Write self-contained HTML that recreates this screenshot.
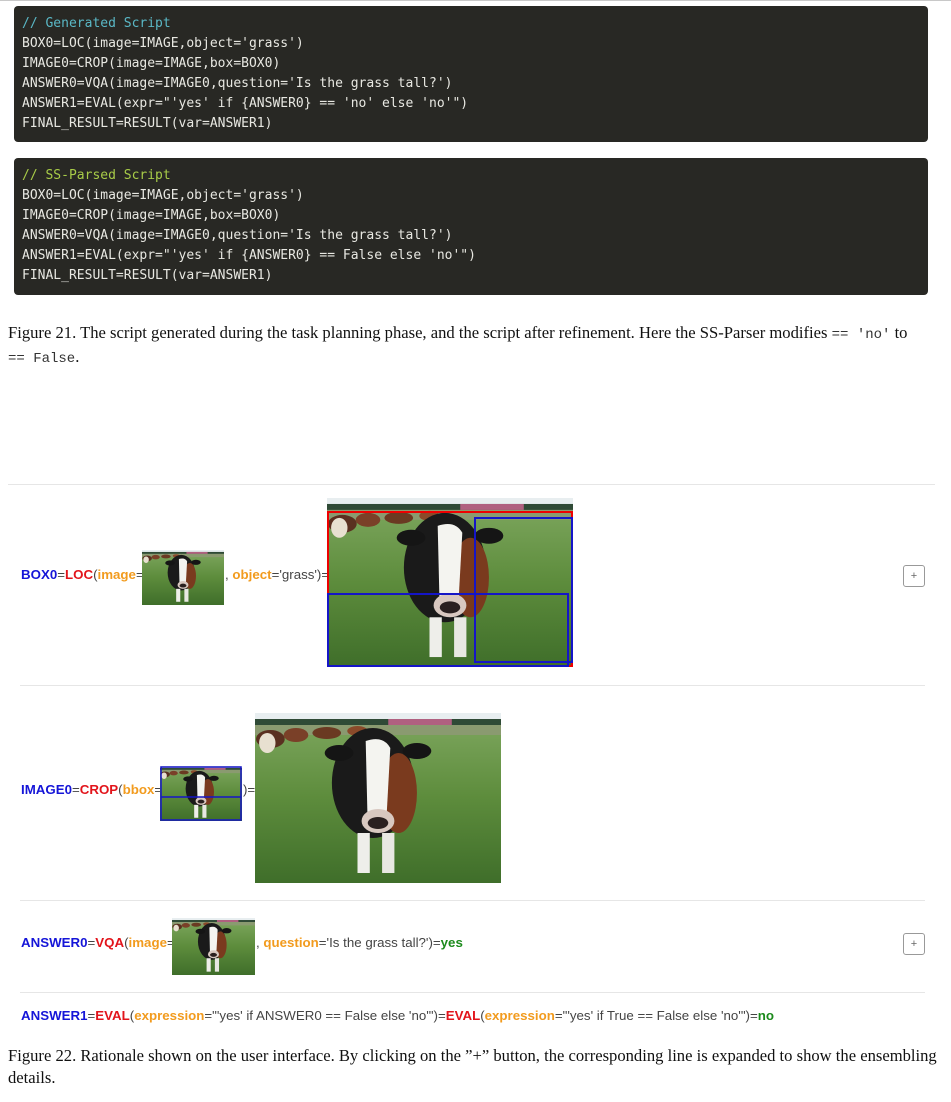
<!DOCTYPE html>
<html><head><meta charset="utf-8"><style>
body{margin:0;width:951px;height:1102px;background:#fff;position:relative;overflow:hidden}
.abs{position:absolute}
.code{position:absolute;left:14px;width:914px;background:#282824;border-radius:4px;font-family:"DejaVu Sans Mono",monospace;font-size:13px;line-height:20px;color:#e8e8e2;padding:8px 0 0 8px;box-sizing:border-box;white-space:pre}
.cap{position:absolute;left:8px;width:930px;font-family:"Liberation Serif",serif;font-size:16.6px;line-height:22px;color:#111}
.tt{font-family:"Liberation Mono",monospace;font-size:14px;color:#333}
.hr{position:absolute;height:1px;background:#e6e6e6}
.ln{position:absolute;font-family:"Liberation Sans",sans-serif;font-size:13.3px;color:#444;white-space:pre}
.b{color:#1515d8;font-weight:bold}.r{color:#e2141b;font-weight:bold}.o{color:#f29b1e;font-weight:bold}.g{color:#1b8a1b;font-weight:bold}
.plus{position:absolute;width:20px;height:20px;border:1px solid #999;border-radius:3px;font-family:"Liberation Sans",sans-serif;font-size:11px;color:#666;text-align:center;line-height:20px}
svg.im{position:absolute}
</style></head><body>
<svg width="0" height="0" style="position:absolute">
<defs>
<linearGradient id="gr" x1="0" y1="0" x2="0" y2="1"><stop offset="0" stop-color="#7fa860"/><stop offset="0.5" stop-color="#5d8c3c"/><stop offset="1" stop-color="#3f6e2a"/></linearGradient>
<symbol id="cow" viewBox="0 0 240 170" preserveAspectRatio="none">
<rect width="240" height="170" fill="url(#gr)"/>
<rect width="240" height="8" fill="#e8eef0"/>
<rect y="6" width="240" height="6" fill="#2f4a36"/>
<rect x="130" y="6" width="62" height="6" fill="#b06080"/>
<rect y="12" width="240" height="10" fill="#8a9a70"/>
<ellipse cx="15" cy="26" rx="14" ry="9" fill="#5a3020"/><ellipse cx="40" cy="22" rx="12" ry="7" fill="#7a4028"/><ellipse cx="70" cy="20" rx="14" ry="6" fill="#6a3a22"/><ellipse cx="100" cy="18" rx="10" ry="5" fill="#8a4a2a"/>
<ellipse cx="12" cy="30" rx="8" ry="10" fill="#e8e0d0"/>
<ellipse cx="115" cy="70" rx="40" ry="55" fill="#1a1a1a"/>
<ellipse cx="140" cy="80" rx="18" ry="40" fill="#7a3a1e"/>
<ellipse cx="82" cy="40" rx="14" ry="8" fill="#151515"/><ellipse cx="158" cy="38" rx="14" ry="8" fill="#151515"/>
<path d="M108 28 Q125 22 132 35 L128 110 Q122 125 110 115 Z" fill="#f4f4f0"/>
<ellipse cx="120" cy="108" rx="16" ry="12" fill="#d8c8c0"/><ellipse cx="120" cy="110" rx="10" ry="6" fill="#2a2020"/>
<rect x="100" y="120" width="12" height="40" fill="#eeeeea"/><rect x="124" y="120" width="12" height="40" fill="#e8e8e2"/>
</symbol>
</defs></svg>
<div class="abs" style="left:0;top:0;width:951px;height:1px;background:#c8c8c8"></div>
<div class="code" style="top:6px;height:136px"><span style="color:#5ab8c6">// Generated Script</span>
BOX0=LOC(image=IMAGE,object='grass')
IMAGE0=CROP(image=IMAGE,box=BOX0)
ANSWER0=VQA(image=IMAGE0,question='Is the grass tall?')
ANSWER1=EVAL(expr="'yes' if {ANSWER0} == 'no' else 'no'")
FINAL_RESULT=RESULT(var=ANSWER1)</div>
<div class="code" style="top:158px;height:137px"><span style="color:#a8cc48">// SS-Parsed Script</span>
BOX0=LOC(image=IMAGE,object='grass')
IMAGE0=CROP(image=IMAGE,box=BOX0)
ANSWER0=VQA(image=IMAGE0,question='Is the grass tall?')
ANSWER1=EVAL(expr="'yes' if {ANSWER0} == False else 'no'")
FINAL_RESULT=RESULT(var=ANSWER1)</div>
<div class="cap" style="top:322px">Figure 21. The script generated during the task planning phase, and the script after refinement. Here the SS-Parser modifies <span class="tt">== 'no'</span> to<br><span class="tt">== False</span>.</div>

<div class="hr" style="left:8px;top:484px;width:927px"></div>
<div class="ln" style="left:21px;top:567px"><span class="b">BOX0</span>=<span class="r">LOC</span>(<span class="o">image</span>=</div>
<svg class="im" style="left:142px;top:550px" width="82" height="55"><use href="#cow" width="82" height="55"/></svg>
<div class="ln" style="left:225px;top:567px">, <span class="o">object</span>='grass')=</div>
<svg class="im" style="left:327px;top:498px" width="246" height="169"><use href="#cow" width="246" height="169"/>
<rect x="1" y="14" width="244" height="154" fill="none" stroke="#e00" stroke-width="2"/>
<rect x="148" y="20" width="97" height="144" fill="none" stroke="#1515c8" stroke-width="2"/>
<rect x="1" y="96" width="240" height="72" fill="none" stroke="#1515c8" stroke-width="2"/>
</svg>
<div class="plus" style="left:903px;top:565px">+</div>

<div class="hr" style="left:20px;top:685px;width:905px"></div>
<svg class="im" style="left:255px;top:713px" width="246" height="170"><use href="#cow" width="246" height="170"/></svg>
<div class="ln" style="left:21px;top:782px"><span class="b">IMAGE0</span>=<span class="r">CROP</span>(<span class="o">bbox</span>=</div>
<svg class="im" style="left:160px;top:766px" width="82" height="55"><use href="#cow" width="82" height="55"/>
<rect x="1" y="1" width="80" height="53" fill="none" stroke="#1515c8" stroke-width="1.5"/><line x1="1" y1="31" x2="81" y2="31" stroke="#1515c8" stroke-width="1.5"/></svg>
<div class="ln" style="left:243px;top:782px">)=</div>

<div class="hr" style="left:20px;top:900px;width:905px"></div>
<div class="ln" style="left:21px;top:935px"><span class="b">ANSWER0</span>=<span class="r">VQA</span>(<span class="o">image</span>=</div>
<svg class="im" style="left:172px;top:918px" width="83" height="57"><use href="#cow" width="83" height="57"/></svg>
<div class="ln" style="left:256px;top:935px">, <span class="o">question</span>='Is the grass tall?')=<span class="g">yes</span></div>
<div class="plus" style="left:903px;top:933px">+</div>

<div class="hr" style="left:20px;top:992px;width:905px"></div>
<div class="ln" style="left:21px;top:1008px"><span class="b">ANSWER1</span>=<span class="r">EVAL</span>(<span class="o">expression</span>="'yes' if ANSWER0 == False else 'no'")=<span class="r">EVAL</span>(<span class="o">expression</span>="'yes' if True == False else 'no'")=<span class="g">no</span></div>

<div class="cap" style="top:1045px">Figure 22. Rationale shown on the user interface. By clicking on the ”+” button, the corresponding line is expanded to show the ensembling<br>details.</div>
</body></html>
